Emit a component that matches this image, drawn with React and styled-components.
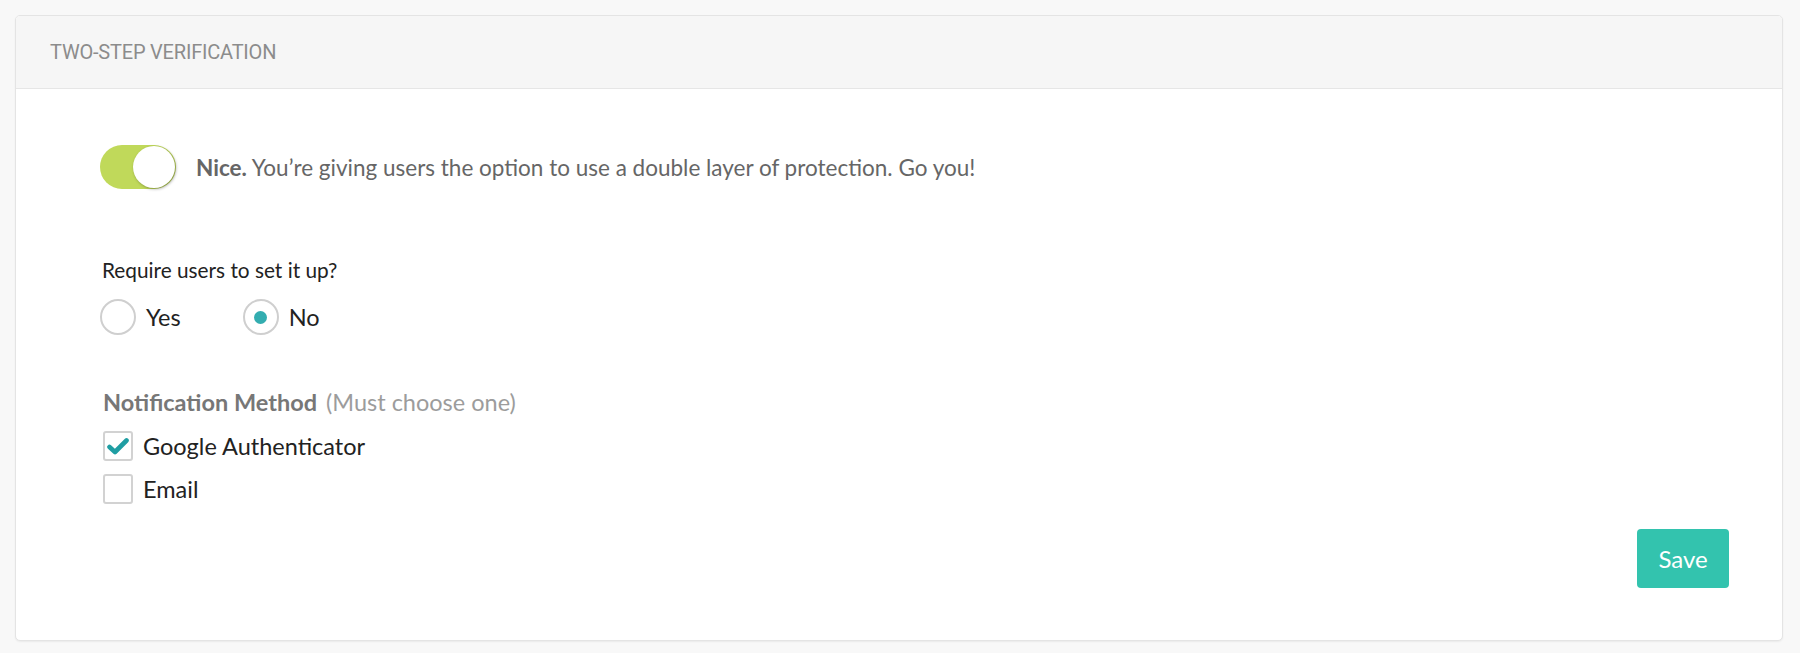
import React, { useState } from 'react';
import styled, { createGlobalStyle } from 'styled-components';

const GlobalStyle = createGlobalStyle`
	body {
		margin: 0;
		background: #f8f8f8;
		font-family: Lato, "Open Sans", sans-serif;
	}
`;

const Page = styled.div`
	padding: 15px 17px 16px 15px;
`;

const Card = styled.div`
	background: #fff;
	border: 1px solid #e4e4e4;
	border-radius: 5px;
	box-shadow: 0 1px 2px rgba(0, 0, 0, 0.06);
	overflow: hidden;
`;

const CardHeader = styled.div`
	height: 72px;
	display: flex;
	align-items: center;
	padding-left: 34px;
	background: #f6f6f6;
	border-bottom: 1px solid #e6e6e6;
	font-family: Roboto, sans-serif;
	font-size: 20px;
	color: #8c8c8c;
	letter-spacing: -0.2px;
	text-transform: uppercase;
`;

const CardBody = styled.div`
	padding: 56px 53px 52px 84px;
	display: flex;
	flex-direction: column;
`;

const ToggleRow = styled.div`
	display: flex;
	align-items: center;
	gap: 20px;
	color: #666;
	font-size: 22.5px;

	b {
		color: #666;
		font-weight: 700;
	}
`;

const Switch = styled.button`
	position: relative;
	width: 76px;
	height: 44px;
	border: none;
	padding: 0;
	border-radius: 22px;
	background: ${(p) => (p.$on ? '#c0d95a' : '#ddd')};
	cursor: pointer;
	flex: none;

	&::after {
		content: '';
		position: absolute;
		top: 1px;
		left: ${(p) => (p.$on ? '33px' : '1px')};
		width: 42px;
		height: 42px;
		border-radius: 50%;
		background: #fff;
		box-shadow: 1px 1px 3px rgba(0, 0, 0, 0.35);
	}
`;

const Question = styled.div`
	margin-top: 68px;
	margin-left: 2px;
	font-size: 20.8px;
	color: #222;
`;

const RadioGroup = styled.div`
	display: flex;
	gap: 62px;
	margin-top: 17px;
`;

const Option = styled.label`
	display: flex;
	align-items: center;
	gap: 10px;
	font-size: 23.5px;
	color: #222;
	cursor: pointer;
`;

const RadioCircle = styled.span`
	width: 32px;
	height: 32px;
	border: 2px solid #cfcfcf;
	border-radius: 50%;
	display: flex;
	align-items: center;
	justify-content: center;

	&::after {
		content: '';
		width: 13px;
		height: 13px;
		border-radius: 50%;
		background: ${(p) => (p.$checked ? '#33adb0' : 'transparent')};
	}
`;

const GroupLabel = styled.div`
	margin-top: 53px;
	margin-left: 3px;
	font-size: 23.5px;
	font-weight: 700;
	color: #777;

	span {
		font-weight: 400;
		color: #9c9c9c;
		margin-left: 9px;
	}
`;

const CheckList = styled.div`
	display: flex;
	flex-direction: column;
	gap: 13px;
	margin-top: 15px;
	margin-left: 3px;
`;

const CheckBox = styled.span`
	width: 26px;
	height: 26px;
	border: 2px solid #d2d2d2;
	border-radius: 3px;
	display: flex;
	align-items: center;
	justify-content: center;
`;

const Footer = styled.div`
	display: flex;
	justify-content: flex-end;
	margin-top: 25px;
`;

const SaveButton = styled.button`
	width: 92px;
	height: 59px;
	border: none;
	border-radius: 4px;
	background: #33c3ae;
	color: #fff;
	font-family: Lato, sans-serif;
	font-size: 24px;
	cursor: pointer;
`;

const Check = () => (
	<svg width="22" height="18" viewBox="0 0 22 18">
		<path d="M2.5 10 L8 15 L19.5 3.5" fill="none" stroke="#1f9ea3" strokeWidth="4.6" strokeLinecap="round" strokeLinejoin="round" />
	</svg>
);

const App = () => {
	const [enabled, setEnabled] = useState(true);
	const [required, setRequired] = useState('no');
	const [methods, setMethods] = useState({ google: true, email: false });

	const toggleMethod = (key) => {
		setMethods({ ...methods, [key]: !methods[key] });
	};

	return (
		<>
			<GlobalStyle />
			<Page>
				<Card>
					<CardHeader>Two-step verification</CardHeader>

					<CardBody>
						<ToggleRow>
							<Switch $on={enabled} onClick={() => setEnabled(!enabled)} aria-label="Two-step verification" />
							<div>
								<b>Nice.</b> You’re giving users the option to use a double layer of protection. Go you!
							</div>
						</ToggleRow>

						<Question>Require users to set it up?</Question>

						<RadioGroup>
							<Option onClick={() => setRequired('yes')}>
								<RadioCircle $checked={required === 'yes'} />
								Yes
							</Option>
							<Option onClick={() => setRequired('no')}>
								<RadioCircle $checked={required === 'no'} />
								No
							</Option>
						</RadioGroup>

						<GroupLabel>
							Notification Method<span>(Must choose one)</span>
						</GroupLabel>

						<CheckList>
							<Option onClick={() => toggleMethod('google')}>
								<CheckBox>{methods.google && <Check />}</CheckBox>
								Google Authenticator
							</Option>
							<Option onClick={() => toggleMethod('email')}>
								<CheckBox>{methods.email && <Check />}</CheckBox>
								Email
							</Option>
						</CheckList>

						<Footer>
							<SaveButton>Save</SaveButton>
						</Footer>
					</CardBody>
				</Card>
			</Page>
		</>
	);
};

export default App;
